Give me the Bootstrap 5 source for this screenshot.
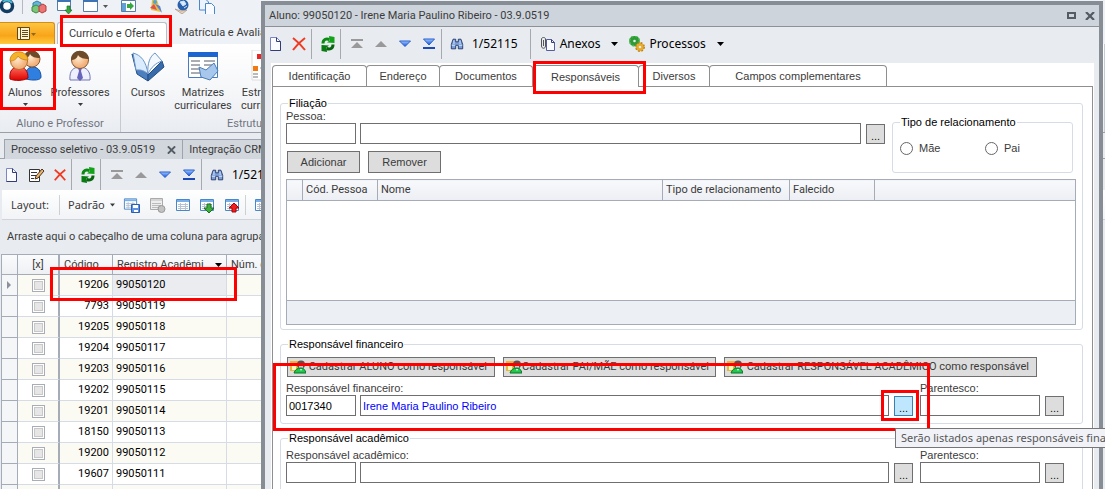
<!DOCTYPE html>
<html lang="pt-BR">
<head>
<meta charset="utf-8">
<meta name="viewport" content="width=device-width, initial-scale=1">
<title>Aluno: 99050120 - Irene Maria Paulino Ribeiro</title>
<link href="https://cdn.jsdelivr.net/npm/bootstrap@5.3.0/dist/css/bootstrap.min.css" rel="stylesheet">
<style>
:root{--ui:Roboto,"Open Sans",sans-serif;--wide:"Noto Sans","Open Sans",sans-serif;--form:"Liberation Sans",Arial,sans-serif;--line:#a5abb7;--soft:#d5dce6;--panel:#e8ebf0}
body{font-family:var(--ui);font-size:11px;line-height:14px;color:#3b3b3b;background:var(--panel)}
svg{display:block;flex:none}
button,input{font:inherit;color:inherit}
.desktop{height:100vh;overflow:hidden;white-space:nowrap}
.plain{border:0;background:none;padding:0}
/* ribbon */
.quick{height:22px;background:#eef1f5;padding:0 0 8px}
.ribtabs{height:22px;background:#eef1f5}
.appbtn{width:55px;height:22px;border:1px solid #d78c12;border-left:0;border-bottom:0;border-radius:0 3px 0 0;background:linear-gradient(#fdc540,#f9a51a 60%,#ffc93c)}
.ribtab{height:22px;width:110px;margin-left:2px;border:1px solid #b9bec7;border-bottom:0;border-radius:3px 3px 0 0;background:#fff}
.ribbon{height:89px;background:linear-gradient(#fff,#f6f7f9 50%,#e9ecf1);border-bottom:1px solid #9aa0a9}
.ribgroup{border-right:1px solid #c6cbd3;height:88px}
.ribbtn{height:73px;padding-top:6px;line-height:13px;display:flex;flex-direction:column;align-items:center}
.ribbtn svg.big{margin-bottom:4px}
.ribname{color:#6f7580;line-height:14px}
/* document tabs */
.doctabs{height:26px;padding:6px 0 0 4px;border-bottom:1px solid #9ea4ae}
.doctab{height:20px;border:1px solid #9ea4ae;border-bottom:0;background:#d2d7de;padding:0 6px}
.doctab+.doctab{border-left:0}
.bar{height:31px;font-family:var(--wide)}
.vsep{width:1px;align-self:stretch;background:#a6a9ae}
.counter{font-size:12px;color:#000}
.drop{margin-left:11px}
.layoutbar{height:29px;background:linear-gradient(#fff,#f1f3f6);margin-left:2px;padding-top:1px}
.layoutbar,.wide{font-family:var(--wide)}
.grouphint{height:35px;margin-left:2px;padding:0 0 0 5px;border-top:1px solid #d0d4da}
/* student grid */
.grid{width:600px;margin-left:1px;table-layout:fixed;border-collapse:separate;border-spacing:0;color:#000}
.grid th{height:21px;padding:0 0 0 4px;font-weight:400;color:#3b3b3b;background:linear-gradient(#fafbfc,#eef0f4);border:solid var(--line);border-width:1px 1px 1px 0}
.grid td{height:21px;padding:0 3px;background:#fff;border:solid var(--soft);border-width:0 1px 1px 0}
.grid tr:nth-child(odd) td{background:#fbfbf4}
.grid tr td:nth-child(1),.grid tr:nth-child(odd) td:nth-child(1){background:#f5f6f8;border-color:var(--line);border-left:1px solid var(--line)}
.grid th:first-child{border-left:1px solid var(--line)}
.grid td:nth-child(2),.grid th:nth-child(2){border-right:2px solid var(--line);text-align:center;padding:0}
.grid td:nth-child(3){text-align:right}
.grid tr td.current{background:#ebecef}
.tick{appearance:none;width:13px;height:13px;margin:0;display:block;border:1px solid #a9adb8;background:#e6e6e6;box-shadow:inset 0 0 0 1px #fff,inset 0 0 0 2px #c8c8c8}
/* dialog window */
.win{position:absolute;top:1px;left:261px;right:2px;border:4px solid #868d94;border-bottom:0;border-right-width:4px;background:var(--panel);min-height:100vh}
.wintitle{height:22px;background:#cdd4dc;border-bottom:1px solid #8d9196;padding:0 4px}
.winbar{height:36px;padding-top:2px}
.winbar .bar{height:30px;font-size:12px;color:#000}
.page{margin:0 5px 0 6px;background:#fff;padding:2px 1px 0;font-family:var(--form)}
.tabrow{height:21px}
.ftab{height:21px;border:1px solid #8f8f8f;border-bottom:0;border-radius:4px 4px 0 0;background:#fff;padding:0;margin-right:-1px;position:relative}
.ftab.active{height:22px}
.tabbody{border:1px solid #8f8f8f;border-bottom:0;padding:9px 9px 0 7px;min-height:100vh}
.box{border:1px solid var(--soft);border-radius:3px;padding:0 6px 0 5px;margin:0 0 7px;min-width:0}
.box legend{float:none;width:auto;margin:0 0 0 2px;padding:0 1px;font-size:11px;line-height:14px;color:#000}
.lab{display:block;height:13px;line-height:13px}
.inp{height:21px;border:1px solid #6f6f6f;border-radius:0;background:#fff;padding:0 2px;color:#000;min-width:0;display:block}
.inp.code{width:70px}
.inp.rel{width:120px}
.gbtn{border:1px solid #6f6f6f;background:#ddd;color:#3b3b3b;border-radius:0;padding:0}
.gbtn.dots{width:19px;height:20px;margin-top:1px;color:#111;padding-top:3px;line-height:14px}
.gbtn.hot{background:#bee6fd;border-color:#3c7fb1}
.gbtn.act{width:73px;height:22px}
.gbtn.reg{height:20px;padding:0 7px 0 2px;font-family:var(--ui)}
.g4{gap:4px}.g5{gap:5px}.g8{gap:8px}
.people{width:100%;table-layout:fixed;border-collapse:collapse;font-family:var(--ui);margin:6px 0 4px}
.people th{height:21px;font-weight:400;padding:0 0 0 3px;background:linear-gradient(#f8f9fb,#eceff4)}
.people th,.people td{border:1px solid var(--line)}
.people tbody td{height:100px}
.people tfoot td{height:24px;background:#eceff4}
.opt{appearance:none;width:13px;height:13px;margin:0;border:1px solid #666;border-radius:50%;background:#fff}
.hint{position:absolute;left:895px;top:428px;height:20px;border:1px solid #767676;background:#f1f2f7;color:#575757;padding:0 5px;line-height:18px;font-family:var(--wide)}
.mark-red{position:absolute;border:3px solid #f00;pointer-events:none}
</style>
</head>
<body>
<svg width="0" height="0" style="position:absolute">
<defs>
<linearGradient id="gb" x1="0" y1="0" x2="0" y2="1"><stop offset="0" stop-color="#9cc8ff"/><stop offset="1" stop-color="#1a53d8"/></linearGradient>
<linearGradient id="gr" x1="0" y1="0" x2="0" y2="1"><stop offset="0" stop-color="#ff6a5a"/><stop offset="1" stop-color="#d00"/></linearGradient>
<radialGradient id="skin" cx=".4" cy=".4"><stop offset="0" stop-color="#ffe9cf"/><stop offset="1" stop-color="#f3b27c"/></radialGradient>
</defs>
<symbol id="i-new" viewBox="0 0 16 16"><path d="M3.500 1.500h6l4 4v9h-10z" fill="#fbfcff" stroke="#7d86c0"/><path d="M9.500 1.500v4h4v9h-10" fill="none" stroke="#343c78"/></symbol>
<symbol id="i-edit" viewBox="0 0 16 16"><path d="M1.500 2.500h10v12h-10z" fill="#fff" stroke="#333"/><path d="M3 5.500h6M3 8.500h5M3 11.500h3" stroke="#333"/><path d="M7 12l1-3 6-7 2 2-6 7z" fill="#e8b36b" stroke="#4a3420"/></symbol>
<symbol id="i-del" viewBox="0 0 16 16"><path d="M2 2c4 3 8 7 12 12M14 2C10 5 5 10 2 14" fill="none" stroke="#f03a22" stroke-width="2"/></symbol>
<symbol id="i-ref" viewBox="0 0 16 16"><path d="M3 7.500C3 3.500 6 2 9.500 3.500" fill="none" stroke="#0a8a12" stroke-width="3"/><path d="M9 0l5.500 1v6L7 6.500l2.500-2z" fill="#12a31b"/><path d="M13 8.500c0 4-3 5.500-6.500 4" fill="none" stroke="#07650d" stroke-width="3"/><path d="M7 16l-5.500-1V9L9 9.500l-2.500 2z" fill="#0a7a12"/></symbol>
<symbol id="i-first" viewBox="0 0 16 16"><path d="M2 3h12v2H2zM8 6l6 6H2z" fill="#999"/></symbol>
<symbol id="i-up" viewBox="0 0 16 16"><path d="M8 5l6 6H2z" fill="#999"/></symbol>
<symbol id="i-down" viewBox="0 0 16 16"><path d="M2.500 5h11L8 10.500z" fill="url(#gb)" stroke="#2a5fd0"/></symbol>
<symbol id="i-last" viewBox="0 0 16 16"><path d="M2.500 3h11L8 9z" fill="url(#gb)" stroke="#2a5fd0"/><path d="M2 11h12v2H2z" fill="#1d49b5"/></symbol>
<symbol id="i-find" viewBox="0 0 16 16"><path d="M3.500 2.500h3v3h3v-3h3l2 6v5h-5v-4h-3v4h-5v-5z" fill="#7d9fd8" stroke="#1c3466"/><path d="M2 9.500h4M10 9.500h4M4.500 4v4M11.500 4v4" stroke="#dbe8ff"/></symbol>
<symbol id="i-grid" viewBox="0 0 16 16"><path d="M1.500 2.500h13v11h-13z" fill="#fff" stroke="#4b86c6"/><path d="M2 4h12" stroke="#79b0ea" stroke-width="2"/><path d="M3 7.500h10M3 9.500h10M3 11.500h10M5.500 6v7M10.500 6v7" stroke="#b5c3d4"/></symbol>
<symbol id="i-car" viewBox="0 0 7 4"><path d="M0 0h7L3.500 4z" fill="currentColor"/></symbol>
<symbol id="i-x" viewBox="0 0 10 8"><path d="M1 0l8 8M9 0L1 8" stroke="#555b63" stroke-width="2.200"/></symbol>
<symbol id="i-reg" viewBox="0 0 16 14"><path d="M0 1h9v10H0z" fill="#e3b93f"/><path d="M2 3h4v7H2z" fill="#fff6ba"/><circle cx="11" cy="4.500" r="4" fill="#555"/><path d="M9 4h4v4l-2 1-2-1z" fill="#c9c9c9"/><path d="M4 13c1-3 3-5 7-5 3 0 4 2 5 5z" fill="#20c94b" stroke="#08752a"/><path d="M10 9l1 2 1-2z" fill="#fff"/></symbol>
<symbol id="i-clip" viewBox="0 0 16 16"><path d="M6.500 3.500h5l3 3v8h-8z" fill="#fafbff" stroke="#565d99"/><path d="M11.500 3.500v3h3" fill="none" stroke="#343c78"/><path d="M1.500 3v7c0 3 4 3 4 0V3c0-2-4-2-4 0M3.500 4v6" fill="none" stroke="#555"/></symbol>
<symbol id="i-proc" viewBox="0 0 16 16"><circle cx="5.500" cy="5" r="3.300" fill="none" stroke="#2f9a38" stroke-width="4"/><circle cx="5.500" cy="5" r="4.800" fill="none" stroke="#4cbf52" stroke-width="1.500" stroke-dasharray="2 1.800"/><circle cx="11" cy="11" r="2.800" fill="none" stroke="#e8ab2c" stroke-width="3"/><circle cx="11" cy="11" r="4.300" fill="none" stroke="#b98118" stroke-width="1.300" stroke-dasharray="1.800 1.600"/></symbol>
</svg>

<div class="desktop position-relative">
  <div class="quick d-flex align-items-center">
    <svg width="240" height="14" viewBox="0 0 240 14"><circle cx="7" cy="6" r="5.500" fill="#fff" stroke="#123d63" stroke-width="3.500"/><path d="M3 2a6 6 0 0 1 9 1" fill="none" stroke="#4fb8d0" stroke-width="2"/><path d="M22.500 0v14" stroke="#b4b9c2"/>
    <path d="M33 3l4-2 4 2v5l-4 2-4-2z" fill="#62b6dc" stroke="#3280a8"/><path d="M32 7l4-2 4 2v4l-4 2-4-2z" fill="#7bc779" stroke="#3f8a42"/><path d="M39 6l4-2 3 2v5l-4 2-3-2z" fill="#eb7474" stroke="#b83c3c"/>
    <path d="M57.500.5h13v10h-13z" fill="#fff" stroke="#567ea9"/><path d="M57 1h14" stroke="#3e74b4" stroke-width="2"/><path d="M67 6h3v4h2l-3.500 4L65 10h2z" fill="#37a840" stroke="#197023" stroke-width=".7"/>
    <path d="M83.500.5h14v11h-14z" fill="#fff" stroke="#567ea9"/><path d="M83 1h15" stroke="#3e74b4" stroke-width="2"/><path d="M103 5h5l-2.500 3z" fill="#555"/>
    <path d="M121.500.5h14v11h-14z" fill="#fff" stroke="#567ea9"/><path d="M122 3h4v8h-4z" fill="#5fa1d6"/><path d="M127 4h3V2l4 4-4 4V8h-3z" fill="#37a840"/>
    <path d="M152 0h5l4 12-10-2z" fill="#e7c13c"/><path d="M150 8l4-4 3 6z" fill="#e34e56"/><path d="M155 4l5 2 2 7z" fill="#5b7ed8"/><circle cx="155" cy="2" r="2" fill="#4ea3d8"/>
    <circle cx="183" cy="5" r="5.500" fill="#2860ac"/><path d="M180 2l4-1 2 3-3 2zM184 8l3-2" fill="#dcebff" stroke="#cfe2fa"/><path d="M175 9l6 2 6-1-5 4z" fill="#ecd0b4" stroke="#9d8677" stroke-width=".6"/>
    <path d="M199.500-1h6l3 3v8h-9z" fill="#eaf3ff" stroke="#4e86ca"/><path d="M205.500 3.500h6l3 3v8h-9z" fill="#f7fbff" stroke="#4e86ca"/></svg>
  </div>
  <div class="ribtabs d-flex">
    <button class="appbtn d-flex align-items-center justify-content-center" type="button" aria-label="Menu"><svg width="20" height="14" viewBox="0 0 20 14"><path d="M.5.500h12v12H.5z" fill="#fff3cf" stroke="#60481a"/><path d="M3.500 1v12M5 3.500h6M5 5.500h6M5 7.500h6M5 9.500h6" stroke="#60481a"/><path d="M14 6h5l-2.500 3z" fill="#8d6a20"/></svg></button>
    <button class="ribtab px-0" type="button">Currículo e Oferta</button>
    <button class="plain ms-2 ps-1" type="button">Matrícula e Avaliação</button>
  </div>
  <div class="ribbon d-flex">
    <div class="ribgroup" style="width:121px">
      <div class="d-flex">
        <button class="plain ribbtn" style="width:50px" type="button"><svg class="big" width="34" height="32" viewBox="0 0 34 32"><path d="M18 29c-1-9 2-12 7-12s8 4 8 10c0 3-7 4-15 2z" fill="#2e7fe0" stroke="#17509f"/><circle cx="24" cy="9" r="8" fill="url(#skin)" stroke="#8a5730"/><path d="M16 8c0-10 15-10 16 0-5 0-8-1-10-4-1 3-3 4-6 4z" fill="#6d4a2a"/><path d="M2 29c-1-9 3-12 9-12s9 4 9 11c-4 3-14 3-18 1z" fill="url(#gr)" stroke="#a00"/><circle cx="11" cy="11" r="8.500" fill="url(#skin)" stroke="#b4702c"/><path d="M2 11C2-1 19-1 20 10c-4 0-8-1-10-4-2 4-5 5-8 5z" fill="#f5b32a" stroke="#c27c10" stroke-width=".7"/></svg><span>Alunos</span><svg class="mt-1" width="5" height="3"><use href="#i-car"/></svg></button>
        <button class="plain ribbtn" style="width:60px" type="button"><svg class="big" width="24" height="32" viewBox="0 0 24 32"><path d="M2 30c-1-10 4-13 10-13s11 4 10 13z" fill="#eef0ff" stroke="#7577b4"/><path d="M10 18h4l-1 3 2 7-3 3-3-3 2-7z" fill="#6764bb"/><circle cx="12" cy="10" r="8.500" fill="url(#skin)" stroke="#8a5730"/><path d="M3 10C3-2 20-2 21 9c-5 0-9-1-11-4-1 4-4 5-7 5z" fill="#6d4a2a"/></svg><span>Professores</span><svg class="mt-1" width="5" height="3"><use href="#i-car"/></svg></button>
      </div>
      <div class="ribname text-center">Aluno e Professor</div>
    </div>
    <div class="ribgroup flex-fill">
      <div class="d-flex">
        <button class="plain ribbtn" style="width:54px" type="button"><svg class="big" width="34" height="32" viewBox="0 0 34 32"><path d="M1 4l16 21v6L6 24z" fill="#4c7fc0" stroke="#254f86"/><path d="M17 25L31 11l2 6-16 14z" fill="#376ba9" stroke="#254f86"/><path d="M2 3c8 2 13 8 15 21C12 19 7 20 5 20z" fill="#dcecff" stroke="#6c96c8"/><path d="M17 24c-1-10 2-18 7-21l7 8C25 13 20 17 17 24z" fill="#f4f9ff" stroke="#6c96c8"/></svg><span>Cursos</span></button>
        <button class="plain ribbtn" style="width:56px" type="button"><svg class="big" width="32" height="32" viewBox="0 0 32 32"><path d="M1.500 2.500h29v25h-29z" fill="#fff" stroke="#477cc2"/><path d="M1 4.500h30" stroke="#1d65cf" stroke-width="5"/><path d="M4 11h9M4 15h9M4 19h9M4 23h9M17 11h11M17 15h11" stroke="#555b66"/><path d="M12 17l7 3 8-7 4 8-8 9-9-3z" fill="#a7c8ec" stroke="#4d7eb5"/></svg><span>Matrizes<br>curriculares</span></button>
        <button class="plain ribbtn" style="width:66px" type="button"><svg class="big" width="32" height="32" viewBox="0 0 32 32"><path d="M4 0h24v30H4z" fill="#fff" stroke="#ddd"/><path d="M9 4h5v5H9z" fill="#e22"/><path d="M5 16h5v5H5z" fill="#f37a12"/><path d="M12 18h6v-9" fill="none" stroke="#999"/><path d="M5 24h5M5 27h5" stroke="#777"/></svg><span>Estrutura<br>curricular</span></button>
      </div>
      <div class="ribname" style="padding-left:106px">Estrutura de Cursos</div>
    </div>
  </div>

  <div class="doctabs d-flex">
    <div class="doctab d-flex align-items-center g8"><span>Processo seletivo - 03.9.0519</span><button class="plain ms-1" type="button" aria-label="Fechar"><svg width="9" height="8"><use href="#i-x"/></svg></button></div>
    <div class="doctab d-flex align-items-center"><span>Integração CRM</span></div>
  </div>
  <div class="bar d-flex align-items-center" style="padding-left:3px">
    <button class="plain" type="button" aria-label="Novo"><svg width="16" height="16"><use href="#i-new"/></svg></button>
    <button class="plain ms-2" type="button" aria-label="Editar"><svg width="18" height="16"><use href="#i-edit"/></svg></button>
    <button class="plain ms-2" type="button" aria-label="Excluir"><svg width="14" height="16"><use href="#i-del"/></svg></button>
    <span class="vsep mx-1"></span>
    <button class="plain ms-1" type="button" aria-label="Atualizar"><svg width="16" height="16"><use href="#i-ref"/></svg></button>
    <span class="vsep ms-1 me-2"></span>
    <button class="plain" type="button" aria-label="Primeiro"><svg width="16" height="16"><use href="#i-first"/></svg></button>
    <button class="plain ms-2" type="button" aria-label="Anterior"><svg width="16" height="16"><use href="#i-up"/></svg></button>
    <button class="plain ms-2" type="button" aria-label="Próximo"><svg width="16" height="16"><use href="#i-down"/></svg></button>
    <button class="plain ms-2" type="button" aria-label="Último"><svg width="16" height="16"><use href="#i-last"/></svg></button>
    <span class="vsep ms-1 me-2"></span>
    <button class="plain" type="button" aria-label="Localizar"><svg width="14" height="14"><use href="#i-find"/></svg></button>
    <span class="counter ms-2">1/52115</span>
  </div>
  <div class="layoutbar d-flex align-items-center">
    <span style="width:57px;padding-left:9px">Layout:</span><span class="vsep my-1 opacity-50"></span>
    <button class="plain d-flex align-items-center ms-2" type="button" style="width:47px"><span class="flex-fill text-start">Padrão</span><svg width="5" height="4"><use href="#i-car"/></svg></button>
    <svg class="ms-2" width="18" height="18" viewBox="0 0 18 18"><use href="#i-grid" width="15" height="16"/><path d="M8.500 8.500h8v8h-8z" fill="#5d92e4" stroke="#2b5eae"/><path d="M10 9h5v3h-5zM11 14h4v2h-4z" fill="#fff"/></svg>
    <svg class="ms-2" width="18" height="18" viewBox="0 0 18 18"><path d="M1.500 2.500h12v11h-12z" fill="#eee" stroke="#aaa"/><path d="M2 4h11M3 7.500h9M3 9.500h9M3 11.500h9" stroke="#bbb"/><circle cx="12.500" cy="13" r="3.500" fill="#c2c2c2" stroke="#999"/></svg>
    <svg class="ms-2" width="16" height="16"><use href="#i-grid"/></svg>
    <svg class="ms-2 me-1" width="17" height="16" viewBox="0 0 17 16"><use href="#i-grid" width="16" height="16"/><path d="M8 7h4v4h3l-5 5-5-5h3z" fill="#3fae3f" stroke="#1c6e20"/></svg>
    <svg class="ms-1" width="17" height="16" viewBox="0 0 17 16"><use href="#i-grid" width="16" height="16"/><path d="M8 15h4v-4h3l-5-5-5 5h3z" fill="#f02020" stroke="#a00"/></svg>
    <span class="vsep my-1 ms-1 me-2 opacity-50"></span>
    <svg width="16" height="16"><use href="#i-grid"/></svg>
  </div>
  <div class="grouphint d-flex align-items-center">Arraste aqui o cabeçalho de uma coluna para agrupar</div>
  <table class="grid">
    <colgroup><col style="width:17px"><col style="width:42px"><col style="width:53px"><col style="width:114px"><col></colgroup>
    <thead><tr><th></th><th>[x]</th><th>Código</th><th><span class="d-flex align-items-center justify-content-between pe-1">Registro Acadêmi <svg class="text-black" width="7" height="4"><use href="#i-car"/></svg></span></th><th>Núm. cartão</th></tr></thead>
    <tbody id="rows"></tbody>
  </table>

  <div class="mark-red" style="left:60px;top:15px;width:112px;height:32px"></div>
  <div class="mark-red" style="left:0;top:48px;width:56px;height:62px"></div>

  <section class="win">
    <div class="wintitle d-flex align-items-center justify-content-between"><span>Aluno: 99050120 - Irene Maria Paulino Ribeiro - 03.9.0519</span>
      <span class="d-flex align-items-center"><button class="plain me-2" type="button" aria-label="Maximizar"><svg width="11" height="8" viewBox="0 0 11 8"><path d="M2 1h7v5H2z" fill="none" stroke="#555b63" stroke-width="2"/></svg></button><button class="plain" type="button" aria-label="Fechar"><svg width="10" height="8"><use href="#i-x"/></svg></button></span></div>
    <div class="winbar"><div class="bar d-flex align-items-center" style="padding-left:2px">
      <button class="plain" type="button" aria-label="Novo"><svg width="16" height="16"><use href="#i-new"/></svg></button>
      <button class="plain ms-2" type="button" aria-label="Excluir"><svg width="16" height="16"><use href="#i-del"/></svg></button>
      <span class="vsep mx-1"></span>
      <button class="plain ms-1" type="button" aria-label="Atualizar"><svg width="16" height="16"><use href="#i-ref"/></svg></button>
      <span class="vsep ms-1 me-2"></span>
      <button class="plain" type="button" aria-label="Primeiro"><svg width="16" height="16"><use href="#i-first"/></svg></button>
      <button class="plain ms-2" type="button" aria-label="Anterior"><svg width="16" height="16"><use href="#i-up"/></svg></button>
      <button class="plain ms-2" type="button" aria-label="Próximo"><svg width="16" height="16"><use href="#i-down"/></svg></button>
      <button class="plain ms-2" type="button" aria-label="Último"><svg width="16" height="16"><use href="#i-last"/></svg></button>
      <span class="vsep ms-1 me-2"></span>
      <button class="plain" type="button" aria-label="Localizar"><svg width="14" height="14"><use href="#i-find"/></svg></button>
      <span class="counter ms-2">1/52115</span>
      <span class="vsep" style="margin:0 9px 0 12px"></span>
      <button class="plain d-flex align-items-center" type="button"><svg class="me-1" width="16" height="16"><use href="#i-clip"/></svg><span>Anexos</span><svg class="drop" width="7" height="4"><use href="#i-car"/></svg></button>
      <button class="plain d-flex align-items-center drop" type="button"><svg class="me-1" width="16" height="16"><use href="#i-proc"/></svg><span>Processos</span><svg class="drop" width="7" height="4"><use href="#i-car"/></svg></button>
    </div></div>
    <div class="page">
      <div class="tabrow d-flex">
        <button class="ftab" style="width:95px" type="button">Identificação</button>
        <button class="ftab" style="width:74px" type="button">Endereço</button>
        <button class="ftab" style="width:94px" type="button">Documentos</button>
        <button class="ftab active" style="width:107px" type="button">Responsáveis</button>
        <button class="ftab" style="width:72px" type="button">Diversos</button>
        <button class="ftab" style="width:178px" type="button">Campos complementares</button>
      </div>
      <div class="tabbody">
        <fieldset class="box">
          <legend>Filiação</legend>
          <div class="d-flex" style="gap:7px">
            <div class="flex-fill">
              <label class="lab" for="pessoa">Pessoa:</label>
              <div class="d-flex">
                <input class="inp code" id="pessoa"><input class="inp flex-fill" style="margin:0 5px 0 4px" aria-label="Nome da pessoa"><button class="gbtn dots" type="button">...</button>
              </div>
              <div class="d-flex g8" style="padding:7px 0 0 1px"><button class="gbtn act" type="button">Adicionar</button><button class="gbtn act" type="button">Remover</button></div>
            </div>
            <fieldset class="box" style="width:181px;height:58px;margin:5px 3px 0 0">
              <legend>Tipo de relacionamento</legend>
              <div class="d-flex align-items-center" style="padding:12px 0 0 2px">
                <input class="opt" type="radio" name="rel" id="mae"><label for="mae" style="width:72px;padding-left:6px">Mãe</label>
                <input class="opt" type="radio" name="rel" id="pai"><label for="pai" style="padding-left:6px">Pai</label>
              </div>
            </fieldset>
          </div>
          <table class="people">
            <colgroup><col style="width:16px"><col style="width:75px"><col><col style="width:127px"><col style="width:85px"><col style="width:201px"></colgroup>
            <thead><tr><th></th><th>Cód. Pessoa</th><th>Nome</th><th>Tipo de relacionamento</th><th>Falecido</th><th></th></tr></thead>
            <tbody><tr><td colspan="6"></td></tr></tbody>
            <tfoot><tr><td colspan="6"></td></tr></tfoot>
          </table>
        </fieldset>

        <fieldset class="box">
          <legend>Responsável financeiro</legend>
          <div class="d-flex g8" style="padding:6px 0 5px 1px">
            <button class="gbtn reg d-flex align-items-center justify-content-between" style="width:208px" type="button"><svg width="16" height="14"><use href="#i-reg"/></svg><span>Cadastrar ALUNO como responsável</span></button>
            <button class="gbtn reg d-flex align-items-center justify-content-between" style="width:213px" type="button"><svg width="16" height="14"><use href="#i-reg"/></svg><span>Cadastrar PAI/MÃE como responsável</span></button>
            <button class="gbtn reg d-flex align-items-center justify-content-between" style="width:313px" type="button"><svg width="16" height="14"><use href="#i-reg"/></svg><span>Cadastrar RESPONSÁVEL ACADÊMICO como responsável</span></button>
          </div>
          <div class="d-flex" style="gap:7px;padding:0 12px 7px 0">
            <div class="flex-fill"><label class="lab" for="rf">Responsável financeiro:</label>
              <div class="d-flex"><input class="inp code" id="rf" value="0017340"><input class="inp flex-fill" style="margin:0 5px 0 4px;color:#00f" value="Irene Maria Paulino Ribeiro" aria-label="Nome do responsável financeiro"><button class="gbtn dots hot" type="button">...</button></div></div>
            <div><label class="lab" for="pf">Parentesco:</label>
              <div class="d-flex g5"><input class="inp rel" id="pf"><button class="gbtn dots" type="button">...</button></div></div>
          </div>
        </fieldset>

        <fieldset class="box">
          <legend>Responsável acadêmico</legend>
          <div class="d-flex" style="gap:7px;padding:4px 12px 7px 0">
            <div class="flex-fill"><label class="lab" for="ra">Responsável acadêmico:</label>
              <div class="d-flex"><input class="inp code" id="ra"><input class="inp flex-fill" style="margin:0 5px 0 4px" aria-label="Nome do responsável acadêmico"><button class="gbtn dots" type="button">...</button></div></div>
            <div><label class="lab" for="pa">Parentesco:</label>
              <div class="d-flex g5"><input class="inp rel" id="pa"><button class="gbtn dots" type="button">...</button></div></div>
          </div>
          <div style="height:60px"></div>
        </fieldset>
      </div>
    </div>
  </section>

  <div class="mark-red" style="left:50px;top:267px;width:187px;height:34px"></div>
  <div class="mark-red" style="left:533px;top:61px;width:113px;height:33px"></div>
  <div class="mark-red" style="left:273px;top:363px;width:657px;height:68px"></div>
  <div class="mark-red" style="left:881px;top:390px;width:38px;height:31px"></div>
  <div class="hint">Serão listados apenas responsáveis financeiros</div>
</div>
<script src="https://cdn.jsdelivr.net/npm/bootstrap@5.3.0/dist/js/bootstrap.bundle.min.js"></script>
<script>
const codes=[19206,7793,19205,19204,19203,19202,19201,18150,19200,19607,19606];
document.getElementById('rows').innerHTML=codes.map((c,i)=>`<tr><td>${i?'':'<svg width="5" height="8" style="margin-left:2px" viewBox="0 0 5 8"><path d="M0 0l4 4-4 4z" fill="#8b909a"/></svg>'}</td><td><input class="tick mx-auto" type="checkbox" aria-label="Selecionar ${c}"></td><td>${c}</td><td${i?'':' class="current"'}>${99050120-i}</td><td></td></tr>`).join('');
</script>
</body>
</html>
